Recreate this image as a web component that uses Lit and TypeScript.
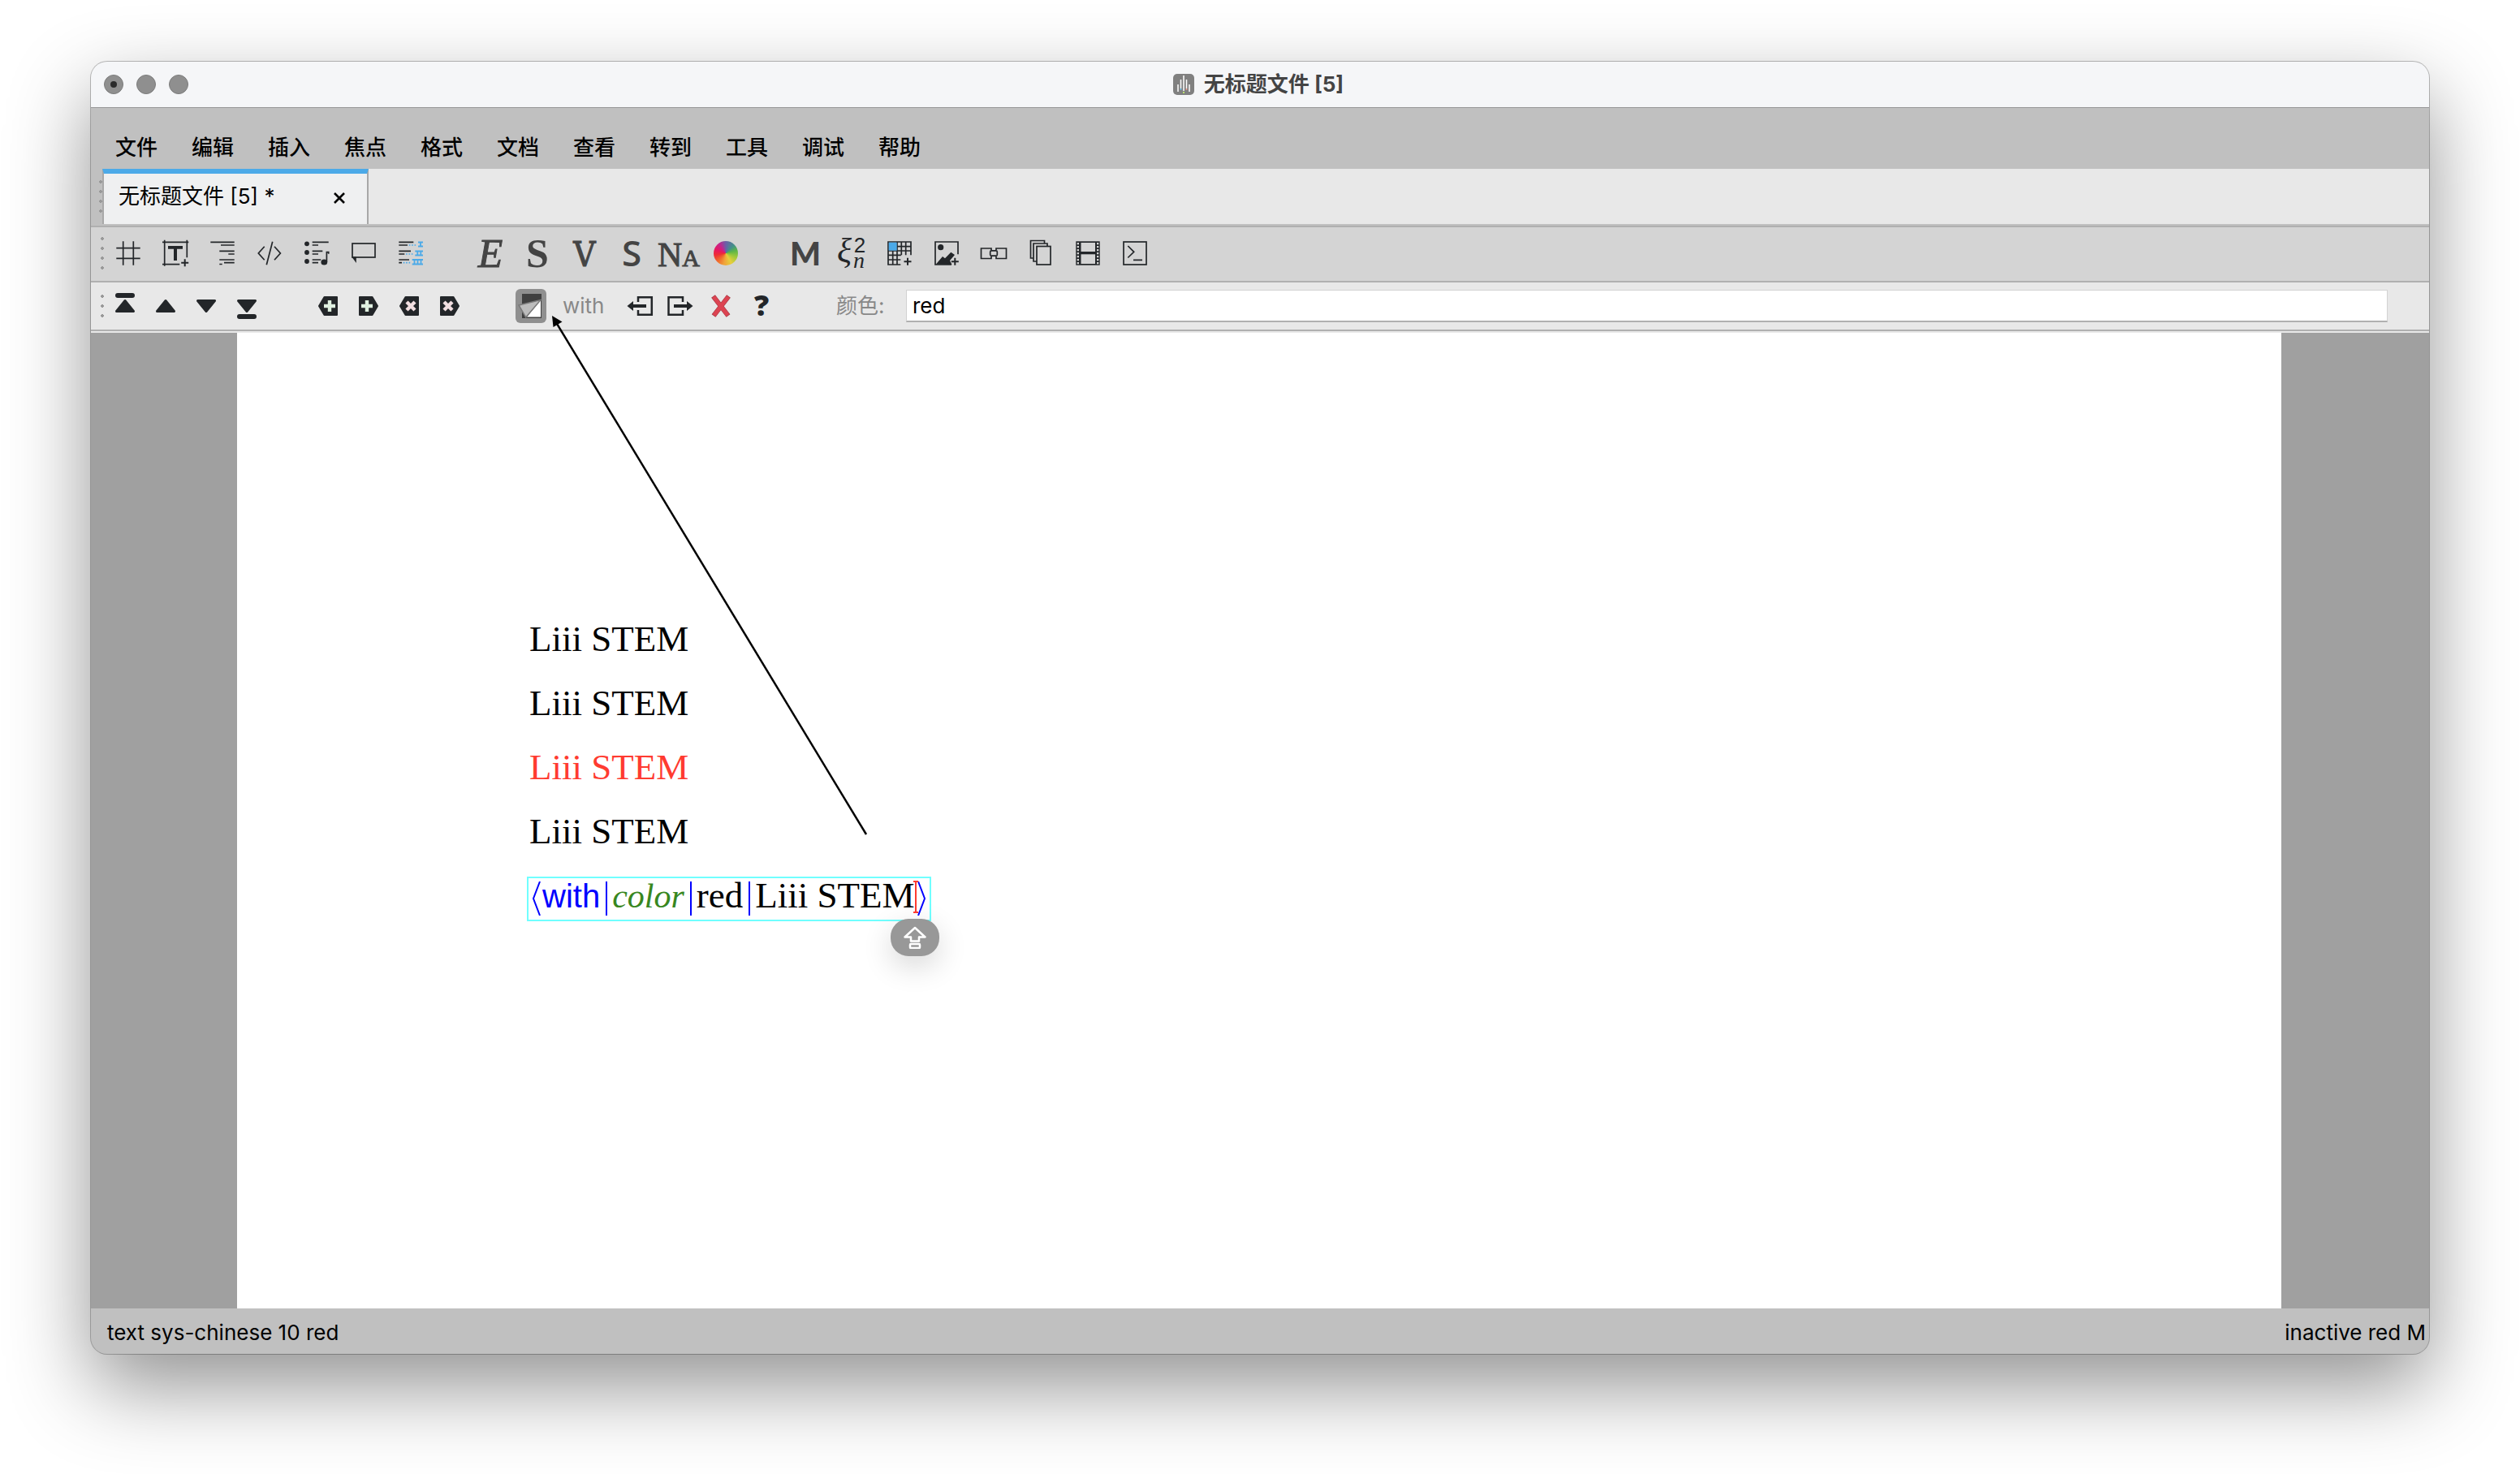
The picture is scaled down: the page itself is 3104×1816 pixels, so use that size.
import { LitElement, html, svg, css, type TemplateResult, type SVGTemplateResult } from "lit";
import { customElement, state } from "lit/decorators.js";

type Art = SVGTemplateResult;
interface Tool {
  label: string;
  art: Art;
}

const INK = "#232629";

const plus = (x: number, y: number): Art =>
  svg`<path d="M${x - 4.5} ${y}h9M${x} ${y - 4.5}v9" stroke=${INK} stroke-width="2" fill="none"/>`;

const insertTools: Tool[] = [
  {
    label: "Section",
    art: svg`<path d="M9.7 1.3v29.4M22.3 1.3v29.4M1.3 9.7h29.4M1.3 22.3h29.4" stroke=${INK} stroke-width="1.7" fill="none"/>`,
  },
  {
    label: "Title",
    art: svg`<path d="M2.7 -.3v32M0 2.3h32.3M30.3 -.3v21.6M0 29.7h21.3" stroke=${INK} stroke-width="1.7" fill="none"/>
      <path d="M7 7h18v3.8h-7V25h-4V10.800h-7z" fill=${INK}/>${plus(27.7, 27.7)}`,
  },
  {
    label: "Alignment",
    art: svg`<path d="M1.300 2.300h29.400M14 6h16.700M12.300 13.300h18.400M23.300 17h7.400M12.300 24h18.400M18 27.700h12.700M12.300 29.500h3.400" stroke=${INK} stroke-width="1.7" fill="none"/>`,
  },
  {
    label: "Code",
    art: svg`<path d="M9.700 7.700L2.300 16l7.400 8.300M19.700 1.700L12.300 30.300M22 7.700l7.400 8.300-7.400 8.300" stroke=${INK} stroke-width="1.7" fill="none"/>`,
  },
  {
    label: "List",
    art: svg`<g fill=${INK}><circle cx="4" cy="4.300" r="2.900"/><circle cx="4" cy="15" r="2.900"/><circle cx="4" cy="26" r="2.900"/><ellipse cx="25.300" cy="27" rx="3.900" ry="3.600"/></g>
      <path d="M10.700 2.300h20M10.700 6H18M10.700 13.300h12.600M10.700 17H18M10.700 24h10.600M10.700 27.700H18M28.400 27V14.700h2.300v2" stroke=${INK} stroke-width="1.7" fill="none"/>`,
  },
  {
    label: "Comment",
    art: svg`<rect x="2" y="4" width="28" height="17" fill="none" stroke=${INK} stroke-width="1.700"/><path d="M1.300 20.500h5.500V28z" fill=${INK}/>`,
  },
  {
    label: "Numbering",
    art: svg`<path d="M1.300 2.300h18M1.300 6H12M1.300 13.300H16M1.300 17h7M1.300 24H14M1.300 27.700H5" stroke=${INK} stroke-width="1.700" fill="none"/>
      <g stroke="#4caae8" fill="none"><path d="M13.700 6H23.300M10 17h9.500M6.700 27.700h9.500" stroke-width="1.700" stroke-dasharray="1.700 1.700"/>
      <path d="M25 2.500h6M25 7.500h6M28 2v6M21.300 13.500H31M21.300 18.500H31M24.300 13v6M28.300 13v6M17.700 24H31M17.700 29.500H31M20.500 24v6M24.500 24v6M28.500 24v6" stroke-width="1.800"/></g>`,
  },
];

const styleTools: Tool[] = [
  { label: "Emphasize", art: svg`<text class="serif" x="16" y="33" font-size="50" font-style="italic" stroke="#444" stroke-width="1">E</text>` },
  { label: "Strong", art: svg`<text class="serif" x="16" y="33" font-size="50" font-weight="700">S</text>` },
  { label: "Verbatim", art: svg`<text class="slab" x="16" y="32" font-size="42" stroke="#444" stroke-width="1">V</text>` },
  { label: "Sample", art: svg`<text class="sans" x="16" y="32" font-size="44" font-weight="600">S</text>` },
  {
    label: "Name",
    art: svg`<text class="serif" x="16" y="32" font-size="42" stroke="#444" stroke-width="1">N<tspan font-size="30">A</tspan></text>`,
  },
];

const holes = [3, 7, 11, 15, 19, 23, 27].map(
  (y) => svg`<rect x="2.700" y=${y} width="2.300" height="2.300"/><rect x="27" y=${y} width="2.300" height="2.300"/>`,
);

const objectTools: Tool[] = [
  { label: "Mathematics", art: svg`<text class="heavy" x="16" y="31" font-size="40">M</text>` },
  {
    label: "Formula",
    art: svg`<g class="formula"><text class="serif" x="6" y="27" font-size="42" font-style="italic">ξ</text><text class="digit" x="25" y="15" font-size="26">2</text><text class="serif" x="24" y="34" font-size="28" font-style="italic">n</text></g>`,
  },
  {
    label: "Table",
    art: svg`<path d="M2 1.300v29.400M7.700 13v17M13 1.300v29.400M18.300 1.300v17M23.700 1.300v17M30 1.300v17M1.300 2h29.400M13 7.700h17M1.300 13h29.400M1.300 18.300h16.500M1.300 24h16M1.300 30h16" stroke=${INK} stroke-width="1.700" fill="none"/>
      <rect x="2.700" y="2.700" width="10" height="10" fill="#4caae8"/>${plus(26, 26.3)}`,
  },
  {
    label: "Image",
    art: svg`<path d="M30 17.300V2H2v28h20" stroke=${INK} stroke-width="1.700" fill="none"/><circle cx="8.700" cy="8.700" r="3.600" fill=${INK}/>
      <path d="M2.700 29.700L11 20l3 2.300 7.300-7.600L26 18l-6 7 2.500 5z" fill=${INK}/>${plus(26.3, 26.3)}`,
  },
  {
    label: "Link",
    art: svg`<g fill="none" stroke=${INK} stroke-width="1.700"><path d="M13 12V10H.500v12.500H13v-2.500M19 12v-2h12.500v12.500H19v-2.500"/><rect x="11.700" y="12.800" width="8.600" height="6.400" rx="1.500"/></g>`,
  },
  {
    label: "Fold",
    art: svg`<g fill="none" stroke=${INK} stroke-width="1.700"><rect x="11" y="7.500" width="17" height="22.500"/><path d="M24 7V4H7v22h4M20.500 4V.500H3.500V22H7"/></g>`,
  },
  {
    label: "Animation",
    art: svg`<rect x="1.300" y="1.300" width="29.400" height="29.400" fill=${INK}/><g fill="#d4d4d4"><rect x="7.500" y="3" width="17.500" height="11"/><rect x="7.500" y="17.300" width="17.500" height="11.700"/>${holes}</g>`,
  },
  {
    label: "Session",
    art: svg`<g fill="none" stroke=${INK} stroke-width="1.700"><rect x="2" y="2" width="28" height="28"/><path d="M7.300 7l7.400 7.300-7.400 7.200M14 24.300h11"/></g>`,
  },
];

const up = svg`<path d="M16 9.500L26.500 22.500h-21z" fill=${INK} stroke=${INK} stroke-width="3" stroke-linejoin="round"/>`;
const down = svg`<path d="M16 22.500L26.500 9.500h-21z" fill=${INK} stroke=${INK} stroke-width="3" stroke-linejoin="round"/>`;
const tagLeft = svg`<path d="M5 16L11.500 5H27v22H11.500z" fill=${INK} stroke=${INK} stroke-width="2" stroke-linejoin="round"/>`;
const tagRight = svg`<path d="M27 16L20.500 5H5v22h15.500z" fill=${INK} stroke=${INK} stroke-width="2" stroke-linejoin="round"/>`;
const tagPlus = (x: number): Art => svg`<path d="M${x - 7} 16h14M${x} 9v14" stroke="#dff0e0" stroke-width="4.400" fill="none"/>`;
const tagCross = (x: number): Art =>
  svg`<path d="M${x - 5} 11l10 10M${x + 5} 11l-10 10" stroke="#f2dfe1" stroke-width="4.400" fill="none"/>`;

const moveTools: Tool[] = [
  { label: "First", art: svg`<rect x="4" y="0" width="24" height="6" rx="3" fill=${INK}/>${up}` },
  { label: "Previous", art: up },
  { label: "Next", art: down },
  { label: "Last", art: svg`${down}<rect x="4" y="26" width="24" height="6" rx="3" fill=${INK}/>` },
];

const argumentTools: Tool[] = [
  { label: "Insert before", art: svg`${tagLeft}${tagPlus(18)}` },
  { label: "Insert after", art: svg`${tagRight}${tagPlus(14)}` },
  { label: "Remove before", art: svg`${tagLeft}${tagCross(18)}` },
  { label: "Remove after", art: svg`${tagRight}${tagCross(14)}` },
];

const structureTools: Tool[] = [
  {
    label: "Exit left",
    art: svg`<path d="M.500 16L8 10v12z" fill=${INK}/><path d="M7 16h17" stroke=${INK} stroke-width="4" fill="none"/><path d="M14 11V5.200h16.800v21.600H14V21" stroke=${INK} stroke-width="2.500" fill="none"/>`,
  },
  {
    label: "Exit right",
    art: svg`<path d="M31.500 16L24 10v12z" fill=${INK}/><path d="M8 16h17" stroke=${INK} stroke-width="4" fill="none"/><path d="M19 11V5.200H1.500v21.600H19V21" stroke=${INK} stroke-width="2.500" fill="none"/>`,
  },
  {
    label: "Remove tag",
    art: svg`<path d="M6.500 4l18.500 24M25.500 4L7 28" stroke="#a33a44" stroke-width="6" fill="none"/><path d="M7 4.500l17.500 23M25 4.500l-17.500 23" stroke="#dc4452" stroke-width="4.800" fill="none"/>`,
  },
  { label: "Help", art: svg`<text class="help" x="16" y="28" font-size="36">?</text>` },
];

const menus = ["文件", "编辑", "插入", "焦点", "格式", "文档", "查看", "转到", "工具", "调试", "帮助"];

@customElement("app-root")
export class AppRoot extends LitElement {
  @state() private colour = "red";

  static styles = css`
    :host {
      display: flex;
      flex-direction: column;
      box-sizing: border-box;
      min-height: 100vh;
      padding: 76px 112px 148px;
      background: #fff;
      color: #000;
      font: 400 26px/32px Inter, "Noto Sans CJK SC", sans-serif;
    }
    * {
      box-sizing: border-box;
    }
    button,
    input {
      font: inherit;
      color: inherit;
      margin: 0;
      padding: 0;
      border: 0;
      background: none;
    }
    .window {
      position: relative;
      flex: 1;
      display: flex;
      flex-direction: column;
      border-radius: 20px;
      background: #c0c0c0;
      box-shadow: 0 0 0 1px rgba(0, 0, 0, 0.25), 0 40px 100px rgba(0, 0, 0, 0.43);
    }
    .titlebar {
      display: grid;
      grid-template-columns: 1fr auto 1fr;
      align-items: center;
      height: 57px;
      padding: 0 20px 0 16px;
      border-bottom: 1px solid #989898;
      border-radius: 20px 20px 0 0;
      background: #f5f6f8;
    }
    .lights {
      display: flex;
      gap: 16px;
    }
    .light {
      display: grid;
      place-items: center;
      width: 24px;
      height: 24px;
      border: 1px solid #7c7c7c;
      border-radius: 50%;
      background: #8f8f8f;
    }
    .edited {
      width: 8px;
      height: 8px;
      border-radius: 50%;
      background: #2b2b2b;
    }
    .title {
      display: flex;
      align-items: center;
      gap: 12px;
      margin: 0;
      color: #444;
      font-size: 26px;
      font-weight: 700;
    }
    .menubar {
      display: flex;
      align-items: flex-end;
      height: 75px;
      padding: 0 9px 8px;
      font-weight: 500;
    }
    .menu {
      width: 94px;
      height: 36px;
      text-align: center;
    }
    .tabs {
      display: flex;
      height: 72px;
      border-bottom: 2px solid #b0b0b0;
    }
    .tab-grip {
      display: flex;
      justify-content: flex-end;
      width: 14px;
      padding-top: 14px;
    }
    .tab-row {
      display: flex;
      flex: 1;
      border-bottom: 2px solid #c0c0c0;
      background: #e8e8e8;
    }
    .tab {
      display: flex;
      align-items: center;
      justify-content: space-between;
      width: 328px;
      padding: 0 22px 6px 18px;
      border: 2px solid #a8a8a8;
      border-top: 6px solid #4caae8;
      border-bottom: 0;
      background: #eff0f1;
    }
    .tab-close {
      display: grid;
      place-items: center;
      width: 24px;
      height: 24px;
      margin-top: 4px;
    }
    .bar {
      display: flex;
      align-items: center;
      border-bottom: 2px solid #b0b0b0;
    }
    .bar.main {
      height: 68px;
      gap: 40px;
      padding-bottom: 2px;
      background: #d4d4d4;
    }
    .bar.focus {
      height: 60px;
      padding: 0 51px 0 0;
      background: #e8e8e8;
    }
    .grip {
      display: block;
      width: 4px;
      height: 40px;
      background: radial-gradient(circle at 2px 2px, #999 2px, transparent 2px) 0 0 / 4px 12px;
    }
    .grip.short {
      height: 28px;
    }
    .lead {
      display: flex;
      padding: 0 1px 0 12px;
    }
    .group {
      display: flex;
    }
    .bar.main .group:nth-of-type(2) {
      margin-left: -40px;
    }
    .tool {
      display: grid;
      place-items: center;
      width: 58px;
      height: 44px;
    }
    .focus .tool {
      width: 50px;
    }
    .focus .group {
      margin-right: 50px;
    }
    .icon {
      display: block;
      width: 32px;
      height: 32px;
      overflow: visible;
    }
    .icon text {
      fill: #444;
      text-anchor: middle;
    }
    .formula text {
      fill: #232629;
    }
    .icon .serif {
      font-family: "Liberation Serif", serif;
    }
    .icon .slab {
      font-family: "DejaVu Serif Condensed", "DejaVu Serif", serif;
    }
    .icon .sans {
      font-family: "Open Sans", sans-serif;
    }
    .icon .digit {
      font-family: "Liberation Sans", sans-serif;
    }
    .icon .heavy {
      font-family: Lato, sans-serif;
      font-weight: 900;
    }
    .icon .help {
      font-family: "Open Sans", sans-serif;
      font-weight: 800;
      fill: #232629;
    }
    .wheel {
      width: 30px;
      height: 30px;
      border-radius: 50%;
      background: conic-gradient(#6a5fa8, #43918a 45deg, #5cb548 75deg, #9cc83a 110deg, #e6cf3c 150deg, #f0a23a 190deg, #f06a2c 225deg, #ee2d35 260deg, #e8175f 290deg, #c4248c 325deg, #6a5fa8);
    }
    .toggle {
      width: 38px;
      height: 42px;
      border-radius: 6px;
      background: #8f8f8f;
    }
    .toggle svg {
      display: block;
    }
    .environment {
      width: 84px;
      padding-left: 14px;
      color: #888;
    }
    .focus .group.structure {
      margin-right: 67px;
    }
    .field-label {
      width: 86px;
      color: #888;
    }
    .field {
      flex: 1;
      min-width: 0;
      height: 40px;
      padding: 0 7px;
      border: 1px solid #d2d2d2;
      border-bottom: 2px solid #b0b0b0;
      background: #fff;
      outline: 0;
    }
    .canvas {
      flex: 1;
      display: flex;
      padding: 0 182px 0 180px;
      border-top: 2px solid #e8e8e8;
      background: #a0a0a0;
    }
    .page {
      flex: 1;
      padding: 338px 357px 0;
      background: #fff;
      font: 400 45px/79px "Liberation Serif", serif;
    }
    .line {
      margin: 0;
      padding: 0 3px;
    }
    .line.red {
      color: #ff3b30;
    }
    .tag {
      display: flex;
      align-items: baseline;
      width: max-content;
      height: 55px;
      margin-top: 16px;
      border: 2px solid #70ffff;
      line-height: 42px;
    }
    .delimiter {
      align-self: flex-start;
      height: 42px;
      margin-top: 4px;
      fill: none;
      stroke: #00f;
      stroke-width: 2px;
    }
    .tag-name {
      color: #00f;
      font-family: "Liberation Sans", sans-serif;
      font-size: 40px;
    }
    .key {
      color: #38871f;
      font-size: 42px;
      font-style: italic;
    }
    .caret {
      position: relative;
      align-self: flex-start;
      width: 2px;
      height: 40px;
      margin-top: 3px;
      background: #ff3b30;
    }
    .caret::before,
    .caret::after {
      content: "";
      position: absolute;
      left: -2px;
      width: 6px;
      height: 2px;
      background: #ff3b30;
    }
    .caret::after {
      bottom: 0;
    }
    .caps {
      position: absolute;
      left: -30px;
      top: 47px;
      display: grid;
      place-items: center;
      width: 60px;
      height: 46px;
      border-radius: 22px;
      background: #989898;
      box-shadow: 0 12px 36px rgba(0, 0, 0, 0.16);
    }
    .status {
      display: flex;
      align-items: center;
      justify-content: space-between;
      height: 56px;
      padding: 4px 4px 0 20px;
    }
    .arrow {
      position: absolute;
      left: 568px;
      top: 313px;
      pointer-events: none;
    }
  `;

  private tools(items: Tool[]): TemplateResult[] {
    return items.map(
      (t) => html`<button class="tool" type="button" aria-label=${t.label}><svg class="icon" viewBox="0 0 32 32">${t.art}</svg></button>`,
    );
  }

  private delimiter(width: number, d: string): TemplateResult {
    return html`<svg class="delimiter" width=${width} height="42" viewBox="0 0 ${width} 42" aria-hidden="true"><path d=${d} /></svg>`;
  }

  private onColour(e: Event) {
    this.colour = (e.target as HTMLInputElement).value;
  }

  render() {
    const bar = this.delimiter(15, "M8 0v42");
    return html`
      <main class="window">
        <header class="titlebar">
          <div class="lights">
            <button class="light" type="button" aria-label="Close"><span class="edited"></span></button>
            <button class="light" type="button" aria-label="Minimize"></button>
            <button class="light" type="button" aria-label="Zoom"></button>
          </div>
          <h1 class="title">
            <svg width="26" height="26" viewBox="0 0 26 26" aria-hidden="true">
              <rect width="26" height="26" rx="5" fill="#808080" />
              <path d="M6 13v9M9.500 7v11M13 2v19M16.500 7v11M20 13v9" stroke="#fff" stroke-width="1.500" />
              <path d="M9.500 18v2" stroke="#6cc4f0" stroke-width="1.500" /><path d="M16.500 18v2" stroke="#f09a8c" stroke-width="1.500" />
              <path d="M13 22v2" stroke="#b8e070" stroke-width="2" />
            </svg>
            无标题文件 [5]
          </h1>
        </header>

        <nav class="menubar">${menus.map((m) => html`<button class="menu" type="button">${m}</button>`)}</nav>

        <div class="tabs">
          <div class="tab-grip"><span class="grip"></span></div>
          <div class="tab-row">
            <div class="tab">
              <span>无标题文件 [5] *</span>
              <button class="tab-close" type="button" aria-label="Close tab">
                <svg width="14" height="14" viewBox="0 0 14 14"><path d="M1 1l12 12M13 1L1 13" stroke="#000" stroke-width="2.600" /></svg>
              </button>
            </div>
          </div>
        </div>

        <div class="bar main">
          <div class="lead"><span class="grip"></span></div>
          <div class="group">${this.tools(insertTools)}</div>
          <div class="group">
            ${this.tools(styleTools)}
            <button class="tool" type="button" aria-label="Color"><span class="wheel"></span></button>
          </div>
          <div class="group">${this.tools(objectTools)}</div>
        </div>

        <div class="bar focus">
          <div class="lead"><span class="grip short"></span></div>
          <div class="group">${this.tools(moveTools)}</div>
          <div class="group">${this.tools(argumentTools)}</div>
          <button class="tool" type="button" aria-label="Toggle source" aria-pressed="true">
            <span class="toggle">
              <svg width="38" height="42" viewBox="0 0 38 42">
                <rect x="8" y="6" width="24" height="30" fill="#404040" />
                <path d="M31 13.500v21H14z" fill="#fff" />
                <path d="M4 20l27-6.500-18.300 21.500z" fill="#bcbcbc" stroke="#7a7a7a" stroke-width="1.500" />
              </svg>
            </span>
          </button>
          <span class="environment">with</span>
          <div class="group structure">${this.tools(structureTools)}</div>
          <label class="field-label" for="colour">颜色:</label>
          <input class="field" id="colour" type="text" .value=${this.colour} @input=${this.onColour} />
        </div>

        <section class="canvas">
          <article class="page">
            <p class="line">Liii STEM</p>
            <p class="line">Liii STEM</p>
            <p class="line red">Liii STEM</p>
            <p class="line">Liii STEM</p>
            <div class="tag">
              ${this.delimiter(17, "M14 0L6 21l8 21")}
              <span class="tag-name">with</span>${bar}<span class="key">color</span>${bar}<span>red</span>${bar}<span>Liii STEM</span>
              <span class="caret">
                <span class="caps">
                  <svg width="28" height="28" viewBox="0 0 28 28" fill="none" stroke="#fff" stroke-width="2.500" stroke-linejoin="round">
                    <path d="M14 2L26.500 13.500H19v5H9v-5H1.500z" />
                    <rect x="8" y="22" width="12" height="5" rx="1" />
                  </svg>
                </span>
              </span>
              ${this.delimiter(16, "M2 0l8 21-8 21")}
            </div>
          </article>
        </section>

        <footer class="status"><span>text sys-chinese 10 red</span><span>inactive red M</span></footer>

        <svg class="arrow" width="392" height="644" viewBox="0 0 392 644" aria-hidden="true">
          <path d="M4 6.600L387 639" stroke="#000" stroke-width="2.500" />
          <path d="M0 0l12.500 7.500-11 6.500z" fill="#000" />
        </svg>
      </main>
    `;
  }
}
